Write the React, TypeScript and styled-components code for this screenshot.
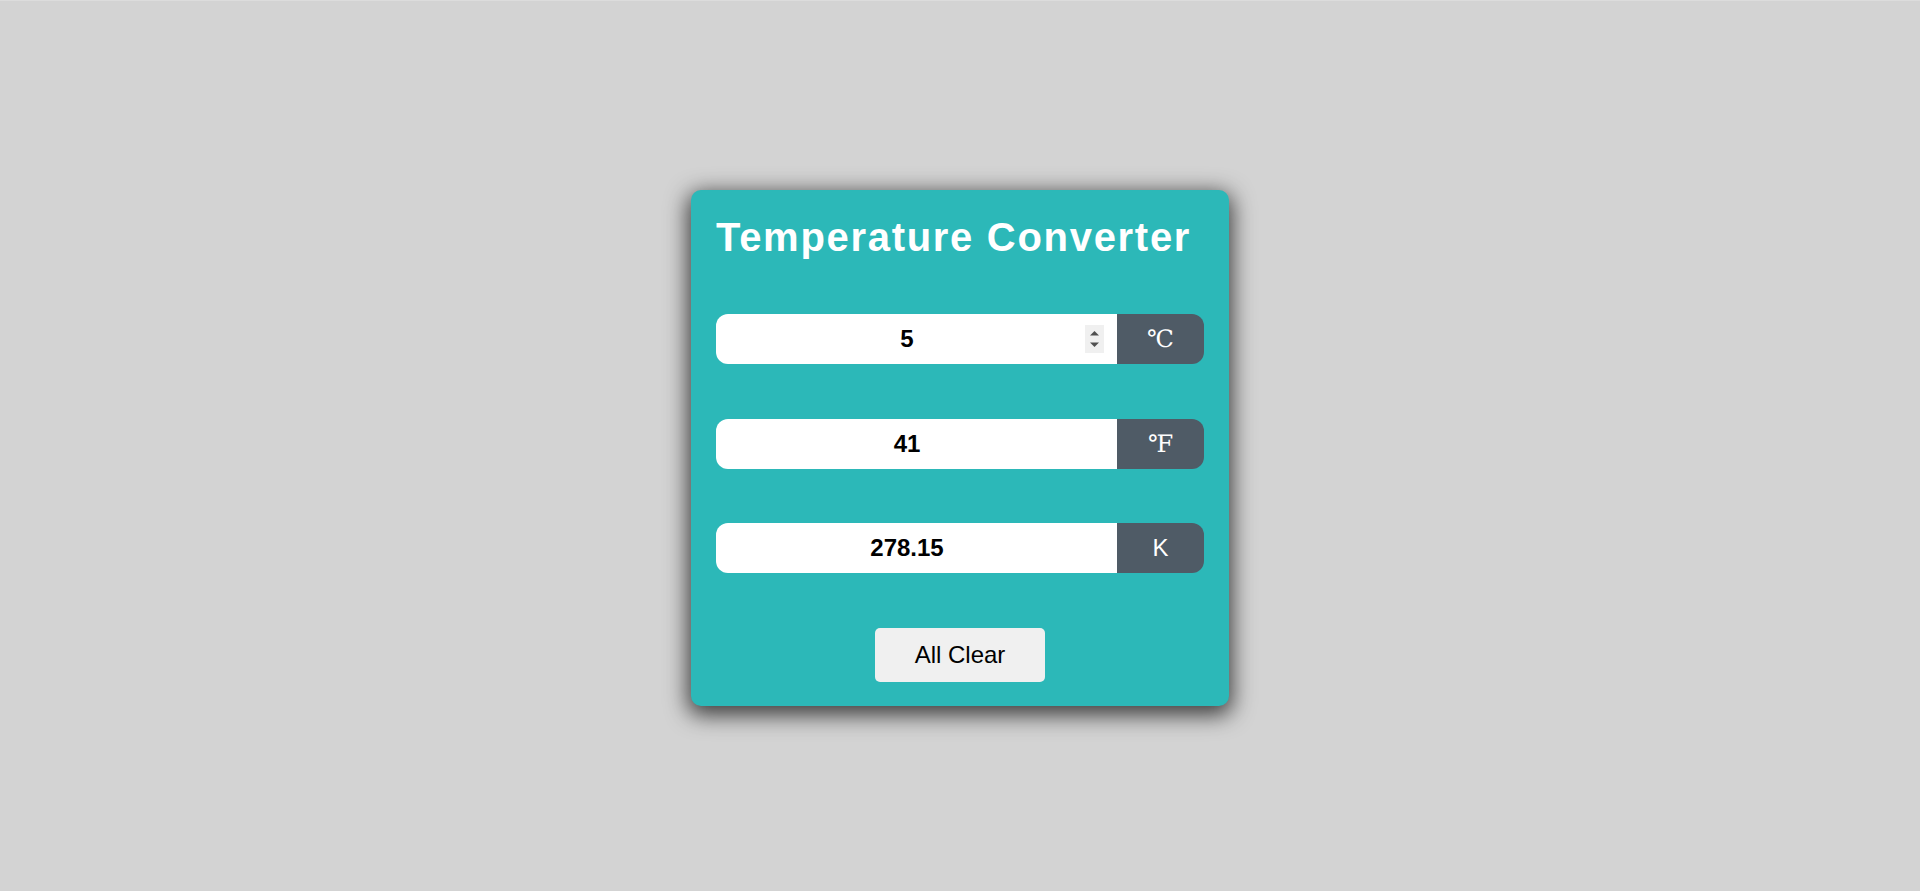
import React, { useState } from 'react';
import styled, { createGlobalStyle } from 'styled-components';

const GlobalStyle = createGlobalStyle`
    html,
    body {
        margin: 0;
        padding: 0;
    }
    body {
        background: #d3d3d3;
        font-family: "Liberation Sans", Arial, sans-serif;
    }
`;

const Page = styled.div`
    min-height: 100vh;
    box-sizing: border-box;
    border-top: 1px solid #dcdcdc;
    padding-top: 3px;
    display: flex;
    align-items: center;
    justify-content: center;
`;

const Card = styled.div`
    width: 538px;
    box-sizing: border-box;
    padding: 24px 25px 24px;
    background: #2cb8b8;
    border-radius: 10px;
    box-shadow: 0 6px 22px 3px rgba(0, 0, 0, 0.72);
    display: flex;
    flex-direction: column;
    gap: 54.5px;
`;

const Title = styled.h1`
    margin: 0;
    font-size: 40px;
    line-height: 46px;
    font-weight: 700;
    letter-spacing: 1.7px;
    color: #fff;
    white-space: nowrap;
`;

const Row = styled.div`
    display: flex;
    height: 50px;
    border-radius: 12px;
    overflow: hidden;
`;

const FieldWrap = styled.div`
    flex: 1;
    min-width: 0;
    position: relative;
    display: flex;
`;

const Field = styled.input`
    flex: 1;
    min-width: 0;
    box-sizing: border-box;
    height: 50px;
    padding: 11px 31px 11px 12px;
    border: none;
    outline: none;
    background: #fff;
    color: #000;
    caret-color: #000;
    font-family: "Liberation Sans", Arial, sans-serif;
    font-size: 24px;
    font-weight: 700;
    text-align: center;
    -moz-appearance: textfield;
    &::-webkit-inner-spin-button,
    &::-webkit-outer-spin-button {
        -webkit-appearance: none;
        margin: 0;
    }
`;

// drawn stepper, shown over the focused field
const Spinner = styled.span`
    position: absolute;
    top: 11px;
    right: 13px;
    width: 19px;
    height: 28px;
    background: #f0f0f0;
    pointer-events: none;
    svg {
        display: block;
    }
`;

const Unit = styled.span<{ $serif?: boolean }>`
    flex: none;
    width: 87px;
    display: flex;
    align-items: center;
    justify-content: center;
    background: #4f5b66;
    color: #fff;
    font-size: 24px;
    font-family: ${({ $serif }) =>
        $serif ? '"Liberation Serif", "DejaVu Serif", serif' : '"Liberation Sans", Arial, sans-serif'};
`;

const ClearButton = styled.button`
    align-self: center;
    padding: 13px 40px;
    border: none;
    border-radius: 5px;
    background: #f0f0f0;
    color: #000;
    font-family: "Liberation Sans", Arial, sans-serif;
    font-size: 24px;
    line-height: 28px;
    cursor: pointer;
`;

const round = (n: number) => String(Math.round(n * 100) / 100);

type Key = 'c' | 'f' | 'k';

const StepIcon = () => (
    <svg width="19" height="28" viewBox="0 0 19 28">
        <polygon points="9.5,6 14,10.5 5,10.5" fill="#505050" />
        <polygon points="5,17.5 14,17.5 9.5,22" fill="#505050" />
    </svg>
);

const App = () => {
    const [c, setC] = useState('5');
    const [f, setF] = useState('41');
    const [k, setK] = useState('278.15');
    const [focused, setFocused] = useState<Key | null>('c');

    const clear = () => {
        setC('');
        setF('');
        setK('');
    };

    const fromC = (v: string) => {
        setC(v);
        if (v === '') return clear();
        const n = parseFloat(v);
        setF(round((n * 9) / 5 + 32));
        setK(round(n + 273.15));
    };
    const fromF = (v: string) => {
        setF(v);
        if (v === '') return clear();
        const n = ((parseFloat(v) - 32) * 5) / 9;
        setC(round(n));
        setK(round(n + 273.15));
    };
    const fromK = (v: string) => {
        setK(v);
        if (v === '') return clear();
        const n = parseFloat(v) - 273.15;
        setC(round(n));
        setF(round((n * 9) / 5 + 32));
    };

    const rows: { key: Key; value: string; onChange: (v: string) => void; unit: string; serif: boolean }[] = [
        { key: 'c', value: c, onChange: fromC, unit: '℃', serif: true },
        { key: 'f', value: f, onChange: fromF, unit: '℉', serif: true },
        { key: 'k', value: k, onChange: fromK, unit: 'K', serif: false },
    ];

    return (
        <>
            <GlobalStyle />
            <Page>
                <Card>
                    <Title>Temperature Converter</Title>
                    {rows.map((r) => (
                        <Row key={r.key}>
                            <FieldWrap>
                                <Field
                                    type="number"
                                    value={r.value}
                                    autoFocus={r.key === 'c'}
                                    onFocus={() => setFocused(r.key)}
                                    onBlur={() => setFocused(null)}
                                    onChange={(e) => r.onChange(e.target.value)}
                                />
                                {focused === r.key && (
                                    <Spinner>
                                        <StepIcon />
                                    </Spinner>
                                )}
                            </FieldWrap>
                            <Unit $serif={r.serif}>{r.unit}</Unit>
                        </Row>
                    ))}
                    <ClearButton onClick={clear}>All Clear</ClearButton>
                </Card>
            </Page>
        </>
    );
};

export default App;
